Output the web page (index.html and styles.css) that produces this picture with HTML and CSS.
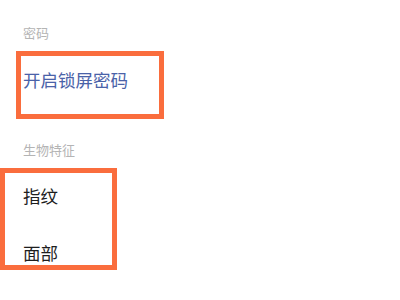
FILE: index.html
```html
<!DOCTYPE html>
<html lang="zh-CN">
<head>
    <meta charset="UTF-8">
    <meta name="viewport" content="width=device-width, initial-scale=1.0">
    <title>密码与生物特征</title>
    <link rel="stylesheet" href="styles.css">
</head>
<body>
    <!-- Settings list -->
    <main class="settings">
        <p class="section-title first">密码</p>
        <div class="item item-link">开启锁屏密码</div>

        <p class="section-title">生物特征</p>
        <div class="item">指纹</div>
        <div class="item">面部</div>

        <!-- Annotation boxes drawn over the screenshot -->
        <span class="mark mark-password"></span>
        <span class="mark mark-bio"></span>
    </main>
</body>
</html>
```

FILE: styles.css
```css
/* General */
body {
    margin: 0;
    padding: 0;
    background-color: #ffffff;
    font-family: "Noto Sans CJK SC", "Noto Sans", sans-serif;
    color: #222;
}

.settings {
    position: relative;
    height: 300px;
    padding: 0 0 0 23px;
    overflow: hidden;
}

/* Section headers */
.section-title {
    margin: 0;
    padding: 34px 0 9px;
    font-size: 13px;
    line-height: 16px;
    color: #b4b4b4;
}

.section-title.first {
    padding: 25px 0 10px;
}

/* Rows */
.item {
    display: flex;
    align-items: center;
    height: 57px;
    font-size: 17.5px;
    color: #1e1e1e;
}

.item-link {
    color: #4a62a8;
}

/* Orange highlight boxes */
.mark {
    position: absolute;
    border: 5px solid #fa6d3d;
    box-sizing: border-box;
}

.mark-password {
    left: 16px;
    top: 51px;
    width: 148px;
    height: 68px;
}

.mark-bio {
    left: 0;
    top: 168px;
    width: 117px;
    height: 102px;
}
```
